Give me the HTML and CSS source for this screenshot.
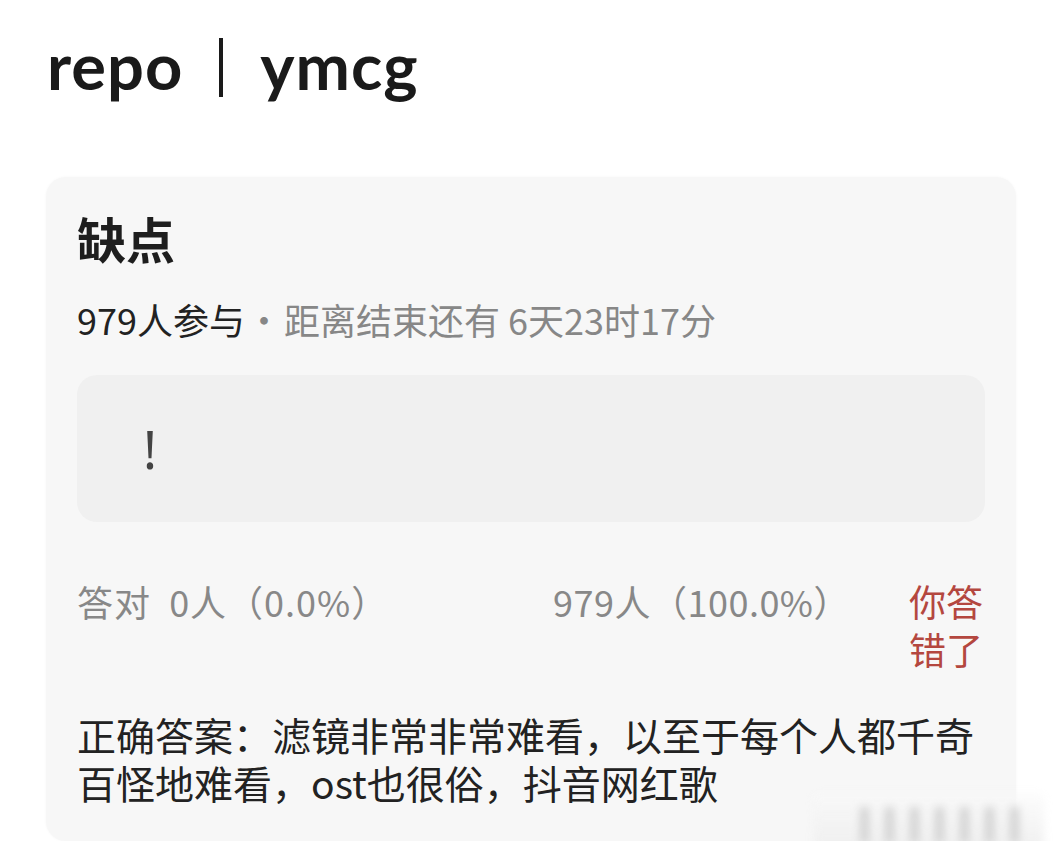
FILE: index.html
```html
<!DOCTYPE html>
<html lang="zh-CN">
<head>
    <meta charset="UTF-8">
    <meta name="viewport" content="width=device-width, initial-scale=1.0">
    <title>repo | ymcg</title>
    <link rel="stylesheet" href="styles.css">
</head>
<body>

    <header class="top">
        <span class="top-name">repo</span>
        <span class="top-bar"></span>
        <span class="top-name">ymcg</span>
    </header>

    <main class="quiz-card">
        <h1 class="quiz-title">缺点</h1>
        <p class="quiz-meta"><span class="quiz-count">979人参与</span><span class="dot">·</span>距离结束还有 6天23时17分</p>

        <div class="quiz-option">!</div>

        <div class="quiz-stats">
            <span class="stat-right">答对&nbsp;&nbsp;0人（0.0%）</span>
            <span class="stat-wrong">979人（100.0%）</span>
            <span class="stat-result">你答错了</span>
        </div>

        <p class="quiz-answer">正确答案：滤镜非常非常难看，以至于每个人都千奇百怪地难看，ost也很俗，抖音网红歌</p>

        <!-- blurred watermark in the corner -->
        <div class="watermark">
            <span class="wm-bar"></span>
            <span class="wm-bar"></span>
            <span class="wm-bar"></span>
            <span class="wm-bar"></span>
            <span class="wm-bar"></span>
            <span class="wm-bar"></span>
            <span class="wm-bar"></span>
        </div>
    </main>

</body>
</html>
```

FILE: styles.css
```css
body {
    margin: 0;
    background-color: #ffffff;
    font-family: "Noto Sans CJK SC", "Noto Sans", sans-serif;
    color: #1e1e1e;
}

.top {
    display: flex;
    align-items: flex-start;
    padding: 33px 0 0 47px;
    height: 65px;
}

.top-name {
    font-family: Lato, "Open Sans", sans-serif;
    font-weight: 700;
    font-size: 65px;
    line-height: 65px;
    color: #1a1a1a;
    letter-spacing: 1px;
}

.top-bar {
    width: 4px;
    height: 59px;
    margin: 5px 37px 0 36px;
    background-color: #1a1a1a;
}

.quiz-card {
    position: relative;
    margin: 79px 0 0 46px;
    width: 970px;
    box-sizing: border-box;
    padding: 31px 31px 35px 31px;
    background-color: #f7f7f7;
    border-radius: 20px;
    box-shadow: 0px 0px 3px rgba(0, 0, 0, 0.04);
}

.quiz-title {
    margin: 0;
    font-size: 49px;
    line-height: 60px;
    font-weight: 700;
    color: #1e1e1e;
}

.quiz-meta {
    margin: 27px 0 0 0;
    font-size: 36px;
    line-height: 48px;
    color: #878787;
}

.quiz-count {
    color: #222222;
}

.quiz-meta .dot {
    padding: 0 2px 0 1px;
}

.quiz-option {
    margin-top: 32px;
    height: 147px;
    display: flex;
    align-items: center;
    padding-left: 66px;
    background-color: #f0f0f0;
    border-radius: 20px;
    font-family: "Noto Sans", sans-serif;
    font-size: 52px;
    color: #444444;
}

.quiz-stats {
    display: flex;
    align-items: flex-start;
    margin-top: 55px;
    font-size: 36px;
    line-height: 48px;
    color: #888888;
}

.stat-right {
    width: 476px;
    letter-spacing: 1px;
}

.stat-wrong {
    letter-spacing: 0.5px;
}

.stat-result {
    margin-left: auto;
    width: 76px;
    font-size: 37px;
    color: #b4473f;
}

.quiz-answer {
    margin: 37px 0 0 0;
    font-size: 39px;
    line-height: 48px;
    color: #222222;
}

.watermark {
    position: absolute;
    right: -28px;
    bottom: -8px;
    width: 230px;
    height: 56px;
    display: flex;
    align-items: flex-end;
    gap: 16px;
    padding: 0 0 6px 46px;
    box-sizing: border-box;
    background: linear-gradient(180deg, rgba(250, 250, 250, 0.5), rgba(238, 238, 238, 0.9));
    filter: blur(4px);
}

.wm-bar {
    width: 9px;
    height: 36px;
    background-color: #d2d2d2;
}
```
